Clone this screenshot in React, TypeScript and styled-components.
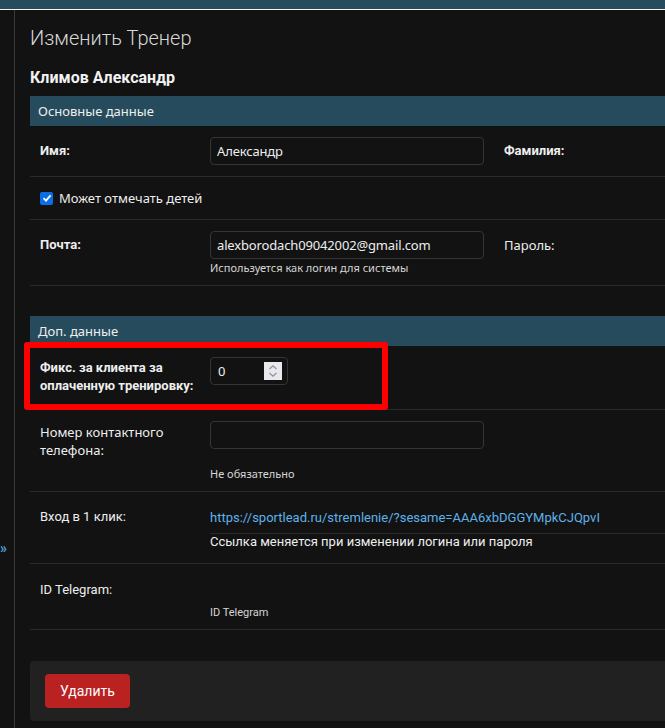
import React from 'react'
import styled, { createGlobalStyle, css } from 'styled-components'

const formFont = `"Noto Sans", "Open Sans", sans-serif`
const roboto = `Roboto, "Liberation Sans", sans-serif`

const GlobalStyle = createGlobalStyle`
  html, body {
    margin: 0;
    padding: 0;
    background: #121212;
    color: #eeeeee;
    font-family: ${formFont};
  }
  * {
    box-sizing: border-box;
  }
`

const TopBar = styled.div`
  height: 10px;
  background: #264b5d;
  border-bottom: 1px solid #f2f2f2;
`

const Shell = styled.div`
  display: flex;
  min-height: 718px;
`

const Sidebar = styled.div`
  width: 15px;
  flex: none;
  border-right: 1px solid #3a3a3a;
`

const SidebarToggle = styled.div`
  margin-top: 530px;
  font-family: ${roboto};
  font-size: 14px;
  font-weight: bold;
  line-height: 16px;
  color: #4aa3df;
`

const Main = styled.main`
  flex: 1;
  min-width: 0;
  padding-left: 15px;
  overflow: hidden;
`

const PageTitle = styled.h1`
  margin: 16px 0 0;
  font-family: ${roboto};
  font-size: 20px;
  font-weight: 300;
  line-height: 24px;
  color: #d8d8d8;
`

const ObjectName = styled.h2`
  margin: 18px 0 0;
  font-family: ${roboto};
  font-size: 16px;
  font-weight: bold;
  line-height: 20px;
  color: #f2f2f2;
`

const Fieldset = styled.section<{ $top?: number; $bottom?: number }>`
  margin: ${({ $top = 0 }) => $top}px 0 ${({ $bottom = 30 }) => $bottom}px;
  width: 720px;
`

const FieldsetHeading = styled.div`
  height: 30px;
  padding: 0 8px;
  background: #264b5d;
  font-size: 13px;
  line-height: 30px;
  color: #eeeeee;
`

const FormRow = styled.div<{ $pt?: number; $pb?: number }>`
  position: relative;
  display: flex;
  align-items: flex-start;
  padding: ${({ $pt = 11 }) => $pt}px 10px ${({ $pb = 11 }) => $pb}px;
  border-bottom: 1px solid #2b2b2b;
`

const Label = styled.div<{ $bold?: boolean; $tall?: boolean; $roboto?: boolean }>`
  width: 170px;
  flex: none;
  white-space: nowrap;
  font-family: ${({ $roboto, $bold }) => ($roboto || $bold ? roboto : formFont)};
  font-size: 13px;
  font-weight: ${({ $bold }) => ($bold ? 'bold' : 'normal')};
  color: #eeeeee;
  line-height: 28px;
  ${({ $tall }) =>
    $tall &&
    css`
      line-height: 18px;
      padding: 2px 0 3px;
    `}
`

const SideLabel = styled(Label)`
  width: auto;
  margin-left: 20px;
`

const FieldCol = styled.div<{ $wide?: boolean }>`
  flex: none;
  width: ${({ $wide }) => ($wide ? '460px' : '274px')};
`

const TextInput = styled.input`
  display: block;
  width: 274px;
  height: 28px;
  padding: 0 6px;
  background: #121212;
  border: 1px solid #353535;
  border-radius: 4px;
  font-family: ${formFont};
  font-size: 13px;
  letter-spacing: -0.15px;
  color: #eeeeee;
  outline: none;
`

const NumberBox = styled.div`
  display: flex;
  align-items: center;
  justify-content: space-between;
  width: 78px;
  height: 28px;
  padding: 0 5px 0 7px;
  border: 1px solid #353535;
  border-radius: 4px;
  font-size: 13px;
  color: #eeeeee;
`

const Spinner = styled.span`
  display: flex;
  align-items: center;
  justify-content: center;
  width: 18px;
  height: 18px;
  background: #e9e9ed;
`

const HelpText = styled.div<{ $gap?: number; $roboto?: boolean }>`
  margin-top: ${({ $gap = 3 }) => $gap}px;
  font-family: ${({ $roboto }) => ($roboto ? roboto : formFont)};
  font-size: 11px;
  line-height: 12px;
  color: #d6d6d6;
`

const CheckLabel = styled.label`
  display: flex;
  align-items: center;
  gap: 6px;
  font-size: 13px;
  line-height: 16px;
  color: #eeeeee;
`

const CheckBox = styled.span`
  display: flex;
  align-items: center;
  justify-content: center;
  width: 13px;
  height: 13px;
  border-radius: 2px;
  background: #0b6ee6;
`

const EmptyField = styled.div`
  height: 28px;
`

const ReadonlyLink = styled.a`
  display: block;
  width: 460px;
  font-family: ${roboto};
  font-size: 13px;
  line-height: 30px;
  color: #5db3ea;
  text-decoration: none;
  border-bottom: 1px solid #2b2b2b;
  white-space: nowrap;
`

const ReadonlyNote = styled.div`
  font-family: ${roboto};
  font-size: 13px;
  line-height: 16px;
  color: #eeeeee;
`

const Highlight = styled.div`
  position: absolute;
  left: -6px;
  top: -4px;
  width: 364px;
  height: 68px;
  border: 6px solid #ff0000;
  border-radius: 3px;
  pointer-events: none;
`

const SubmitRow = styled.div`
  width: 720px;
  padding: 13px 15px;
  background: #212121;
  border-radius: 4px;
`

const DeleteButton = styled.button`
  height: 34px;
  padding: 0 15px;
  border: none;
  border-radius: 4px;
  background: #ba2121;
  font-family: ${roboto};
  font-size: 14px;
  color: #ffffff;
  cursor: pointer;
`

const SpinArrows: React.FC = () => (
  <svg width="10" height="14" viewBox="0 0 10 14" fill="none" stroke="#8f8f9d" strokeWidth="1.2">
    <path d="M1.5 5 L5 1.8 L8.5 5" />
    <path d="M1.5 9 L5 12.2 L8.5 9" />
  </svg>
)

const CheckMark: React.FC = () => (
  <svg width="10" height="10" viewBox="0 0 10 10" fill="none" stroke="#ffffff" strokeWidth="1.8">
    <path d="M1.5 5.2 L4 7.6 L8.6 2.4" />
  </svg>
)

const App: React.FC = () => {
  return (
    <>
      <GlobalStyle />
      <TopBar />
      <Shell>
        <Sidebar>
          <SidebarToggle>»</SidebarToggle>
        </Sidebar>
        <Main>
          <PageTitle>Изменить Тренер</PageTitle>
          <ObjectName>Климов Александр</ObjectName>

          <Fieldset $top={8}>
            <FieldsetHeading>Основные данные</FieldsetHeading>
            <FormRow>
              <Label $bold>Имя:</Label>
              <FieldCol>
                <TextInput defaultValue="Александр" />
              </FieldCol>
              <SideLabel $bold>Фамилия:</SideLabel>
            </FormRow>
            <FormRow $pt={13} $pb={13}>
              <CheckLabel>
                <CheckBox>
                  <CheckMark />
                </CheckBox>
                Может отмечать детей
              </CheckLabel>
            </FormRow>
            <FormRow>
              <Label $bold>Почта:</Label>
              <FieldCol>
                <TextInput defaultValue="alexborodach09042002@gmail.com" />
                <HelpText>Используется как логин для системы</HelpText>
              </FieldCol>
              <SideLabel>Пароль:</SideLabel>
            </FormRow>
          </Fieldset>

          <Fieldset $bottom={31}>
            <FieldsetHeading>Доп. данные</FieldsetHeading>
            <FormRow>
              <Label $bold $tall>
                Фикс. за клиента за
                <br />
                оплаченную тренировку:
              </Label>
              <FieldCol>
                <NumberBox>
                  0
                  <Spinner>
                    <SpinArrows />
                  </Spinner>
                </NumberBox>
              </FieldCol>
              <Highlight />
            </FormRow>
            <FormRow>
              <Label $tall>
                Номер контактного
                <br />
                телефона:
              </Label>
              <FieldCol>
                <TextInput />
                <HelpText $gap={19}>Не обязательно</HelpText>
              </FieldCol>
            </FormRow>
            <FormRow $pb={13}>
              <Label $roboto>Вход в 1 клик:</Label>
              <FieldCol $wide>
                <ReadonlyLink href="#">https://sportlead.ru/stremlenie/?sesame=AAA6xbDGGYMpkCJQpvI</ReadonlyLink>
                <ReadonlyNote>Ссылка меняется при изменении логина или пароля</ReadonlyNote>
              </FieldCol>
            </FormRow>
            <FormRow $pt={12} $pb={10}>
              <Label $roboto>ID Telegram:</Label>
              <FieldCol>
                <EmptyField />
                <HelpText $roboto>ID Telegram</HelpText>
              </FieldCol>
            </FormRow>
          </Fieldset>

          <SubmitRow>
            <DeleteButton>Удалить</DeleteButton>
          </SubmitRow>
        </Main>
      </Shell>
    </>
  )
}

export default App
